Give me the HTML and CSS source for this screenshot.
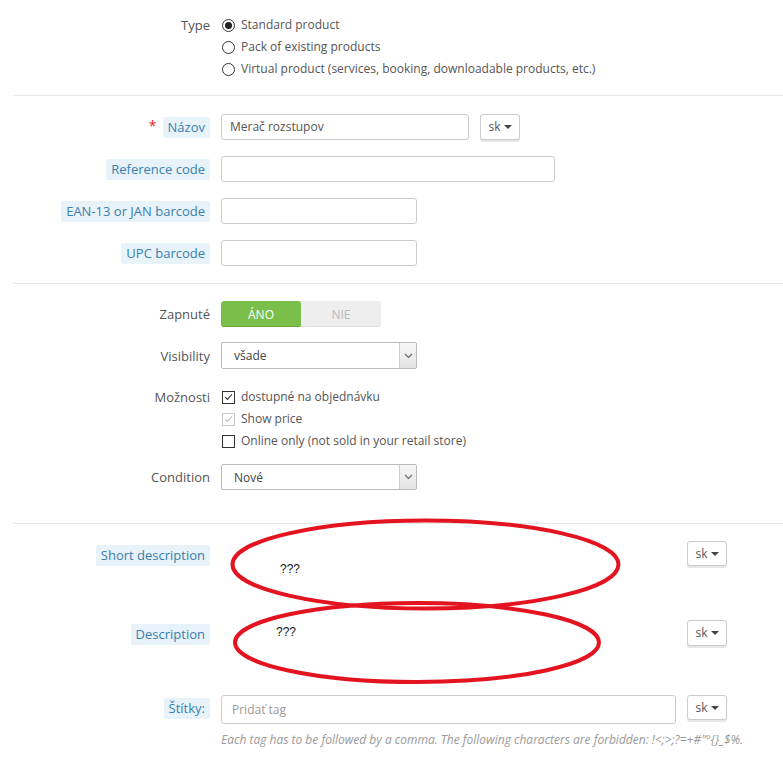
FILE: index.html
```
<!DOCTYPE html>
<html lang="sk">
<head>
<meta charset="utf-8">
<title>Product</title>
<link rel="stylesheet" href="styles.css">
</head>
<body>
<div class="page">
  <section class="sec sec-type">
    <div class="row">
      <div class="lbl"><span class="plain">Type</span></div>
      <div class="ctl">
        <label class="opt"><span class="radio on"></span>Standard product</label>
        <label class="opt"><span class="radio"></span>Pack of existing products</label>
        <label class="opt"><span class="radio"></span>Virtual product (services, booking, downloadable products, etc.)</label>
      </div>
    </div>
  </section>
  <div class="hr"></div>
  <section class="sec sec-codes">
    <div class="row frow">
      <div class="lbl"><span class="req">*</span><span class="tip">Názov</span></div>
      <div class="ctl inline">
        <div class="input w-name">Merač rozstupov</div>
        <div class="langbtn">sk <span class="caret"></span></div>
      </div>
    </div>
    <div class="row frow">
      <div class="lbl"><span class="tip">Reference code</span></div>
      <div class="ctl"><div class="input w-ref"></div></div>
    </div>
    <div class="row frow">
      <div class="lbl"><span class="tip">EAN-13 or JAN barcode</span></div>
      <div class="ctl"><div class="input w-short"></div></div>
    </div>
    <div class="row frow">
      <div class="lbl"><span class="tip">UPC barcode</span></div>
      <div class="ctl"><div class="input w-short"></div></div>
    </div>
  </section>
  <div class="hr"></div>
  <section class="sec sec-opts">
    <div class="row frow">
      <div class="lbl"><span class="plain">Zapnuté</span></div>
      <div class="ctl">
        <div class="switch"><span class="sw-yes">ÁNO</span><span class="sw-no">NIE</span></div>
      </div>
    </div>
    <div class="row frow">
      <div class="lbl"><span class="plain">Visibility</span></div>
      <div class="ctl"><div class="select"><span class="sel-val">všade</span><span class="sel-arrow"><svg width="9" height="6" viewBox="0 0 9 6"><path d="M1 1l3.5 3.5L8 1" fill="none" stroke="#666" stroke-width="1.1"/></svg></span></div></div>
    </div>
    <div class="row checks">
      <div class="lbl"><span class="plain">Možnosti</span></div>
      <div class="ctl">
        <label class="opt"><span class="cb"><svg width="12" height="12" viewBox="0 0 12 12"><path d="M2.5 6.2l2.4 2.5L9.8 3" fill="none" stroke="#333" stroke-width="1.2"/></svg></span>dostupné na objednávku</label>
        <label class="opt"><span class="cb dis"><svg width="12" height="12" viewBox="0 0 12 12"><path d="M2.5 6.2l2.4 2.5L9.8 3" fill="none" stroke="#bbb" stroke-width="1.2"/></svg></span>Show price</label>
        <label class="opt"><span class="cb"></span>Online only (not sold in your retail store)</label>
      </div>
    </div>
    <div class="row frow cond">
      <div class="lbl"><span class="plain">Condition</span></div>
      <div class="ctl"><div class="select"><span class="sel-val">Nové</span><span class="sel-arrow"><svg width="9" height="6" viewBox="0 0 9 6"><path d="M1 1l3.5 3.5L8 1" fill="none" stroke="#666" stroke-width="1.1"/></svg></span></div></div>
    </div>
  </section>
  <div class="hr"></div>
  <section class="sec sec-desc">
    <div class="row drow">
      <div class="lbl"><span class="tip">Short description</span></div>
      <div class="ctl grow"><div class="langbtn">sk <span class="caret"></span></div></div>
    </div>
    <div class="row drow drow2">
      <div class="lbl"><span class="tip">Description</span></div>
      <div class="ctl grow"><div class="langbtn">sk <span class="caret"></span></div></div>
    </div>
    <div class="row trow">
      <div class="lbl"><span class="tip">Štítky:</span></div>
      <div class="ctl">
        <div class="inline">
          <div class="input w-tags placeholder">Pridať tag</div>
          <div class="langbtn">sk <span class="caret"></span></div>
        </div>
        <p class="help">Each tag has to be followed by a comma. The following characters are forbidden: !&lt;;&gt;;?=+#"°{}_$%.</p>
      </div>
    </div>
  </section>

  <svg class="marks" width="783" height="762" viewBox="0 0 783 762">
    <ellipse cx="425.5" cy="564.5" rx="193" ry="44" fill="none" stroke="#e3141f" stroke-width="4"/>
    <ellipse cx="417" cy="642.5" rx="182" ry="39.5" fill="none" stroke="#e3141f" stroke-width="4"/>
  </svg>
  <span class="q q1">???</span>
  <span class="q q2">???</span>
</div>
</body>
</html>
```
FILE: styles.css
```
* { box-sizing: border-box; }
html, body { margin: 0; padding: 0; background: #fff; }
body {
  font-family: "Open Sans", "Liberation Sans", sans-serif;
  font-size: 12px;
  color: #555;
}
.page { position: relative; width: 783px; height: 762px; overflow: hidden; }

.row { display: flex; align-items: flex-start; }
.lbl { width: 210px; flex: none; text-align: right; display: flex; justify-content: flex-end; align-items: center; }
.ctl { margin-left: 11px; }
.inline { display: flex; align-items: center; gap: 11px; }
.grow { flex: 1; display: flex; justify-content: flex-end; padding-right: 56px; }

.plain { line-height: 22px; font-size: 13px; }
.tip {
  background: #e7f2f9;
  color: #3a7fad;
  padding: 0 5px;
  line-height: 21px;
  border-radius: 2px;
  font-size: 13px;
}
.req { color: #e41e1e; font-size: 14px; margin-right: 6px; position: relative; top: -2px; }

.hr { margin-left: 13px; border-top: 1px solid #e8e8e8; }

.sec-type { padding: 14px 0 15px; }
.opt { display: flex; align-items: center; height: 22px; line-height: 22px; }
.radio {
  width: 13px; height: 13px; border: 1px solid #333; border-radius: 50%;
  margin: 0 6px 0 1px; display: inline-flex; align-items: center; justify-content: center; flex: none;
}
.radio.on::after { content: ""; width: 7px; height: 7px; border-radius: 50%; background: #222; }

.sec-codes { padding: 18px 0 17px; }
.frow { min-height: 26px; align-items: center; margin-bottom: 16px; }
.frow .lbl { height: 26px; }
.sec-codes .frow:last-child { margin-bottom: 0; }
.input {
  height: 26px; border: 1px solid #ccc; border-radius: 3px;
  padding: 0 8px; line-height: 24px; font-size: 12px; color: #555; background: #fff;
}
.w-name { width: 248px; }
.w-ref { width: 334px; }
.w-short { width: 196px; }
.w-tags { width: 455px; height: 29px; line-height: 27px; padding: 0 10px; }
.placeholder { color: #999; }

.langbtn {
  width: 40px; height: 26px; border: 1px solid #ccc; border-radius: 3px;
  box-shadow: 0 2px 0 #e6e6e6; background: #fff;
  display: flex; align-items: center; justify-content: center; gap: 3px;
  font-size: 12px; color: #555; line-height: 1;
}
.caret { width: 0; height: 0; border-left: 4px solid transparent; border-right: 4px solid transparent; border-top: 4px solid #444; }

.sec-opts { padding: 17px 0 33px; }
.sec-opts .frow { margin-bottom: 15px; }
.sec-opts .frow.cond { margin-bottom: 0; }
.switch { display: flex; width: 160px; height: 26px; border-radius: 3px; overflow: hidden; background: #eee; box-shadow: inset 0 -1px 0 #ddd; }
.switch span { width: 80px; display: flex; align-items: center; justify-content: center; font-size: 12px; }
.sw-yes { background: #79bf4a; color: #fff; border-radius: 3px; box-shadow: inset 0 -1px 0 #68a83d; }
.sw-no { color: #bbb; }

.select {
  width: 196px; height: 27px; border: 1px solid #bbb; border-radius: 2px; display: flex; background: #fff;
}
.sel-val { flex: 1; padding-left: 12px; line-height: 25px; color: #444; }
.sel-arrow {
  width: 17px; border-left: 1px solid #ccc; background: linear-gradient(#f7f7f7, #e4e4e4);
  display: flex; align-items: center; justify-content: center;
}
.checks { margin: 17px 0 12px; }
.checks .lbl { height: 22px; }
.cb {
  width: 13px; height: 13px; border: 1px solid #333; margin: 0 6px 0 1px; flex: none;
  display: inline-flex; align-items: center; justify-content: center; background: #fff;
}
.cb.dis { border-color: #c8c8c8; }
.cond .select { height: 26px; }

.sec-desc { padding: 17px 0 0; }
.drow { height: 25px; align-items: center; }
.drow .lbl { height: 25px; padding-top: 3px; }
.drow .ctl { width: 562px; }
.drow .langbtn { height: 25px; }
.drow2 { margin-top: 54px; }
.drow2 .langbtn { height: 26px; }
.trow { margin-top: 50px; }
.trow .lbl { height: 27px; }
.trow .langbtn { align-self: flex-start; height: 25px; }
.trow .inline { align-items: flex-start; }
.help { margin: 7px 0 0; font-style: italic; color: #999; font-size: 12px; }

.marks { position: absolute; left: 0; top: 0; pointer-events: none; }
.q { position: absolute; font-family: "Liberation Sans", Arial, sans-serif; font-size: 12px; color: #111; }
.q1 { left: 280px; top: 562px; }
.q2 { left: 276px; top: 625px; }
```
